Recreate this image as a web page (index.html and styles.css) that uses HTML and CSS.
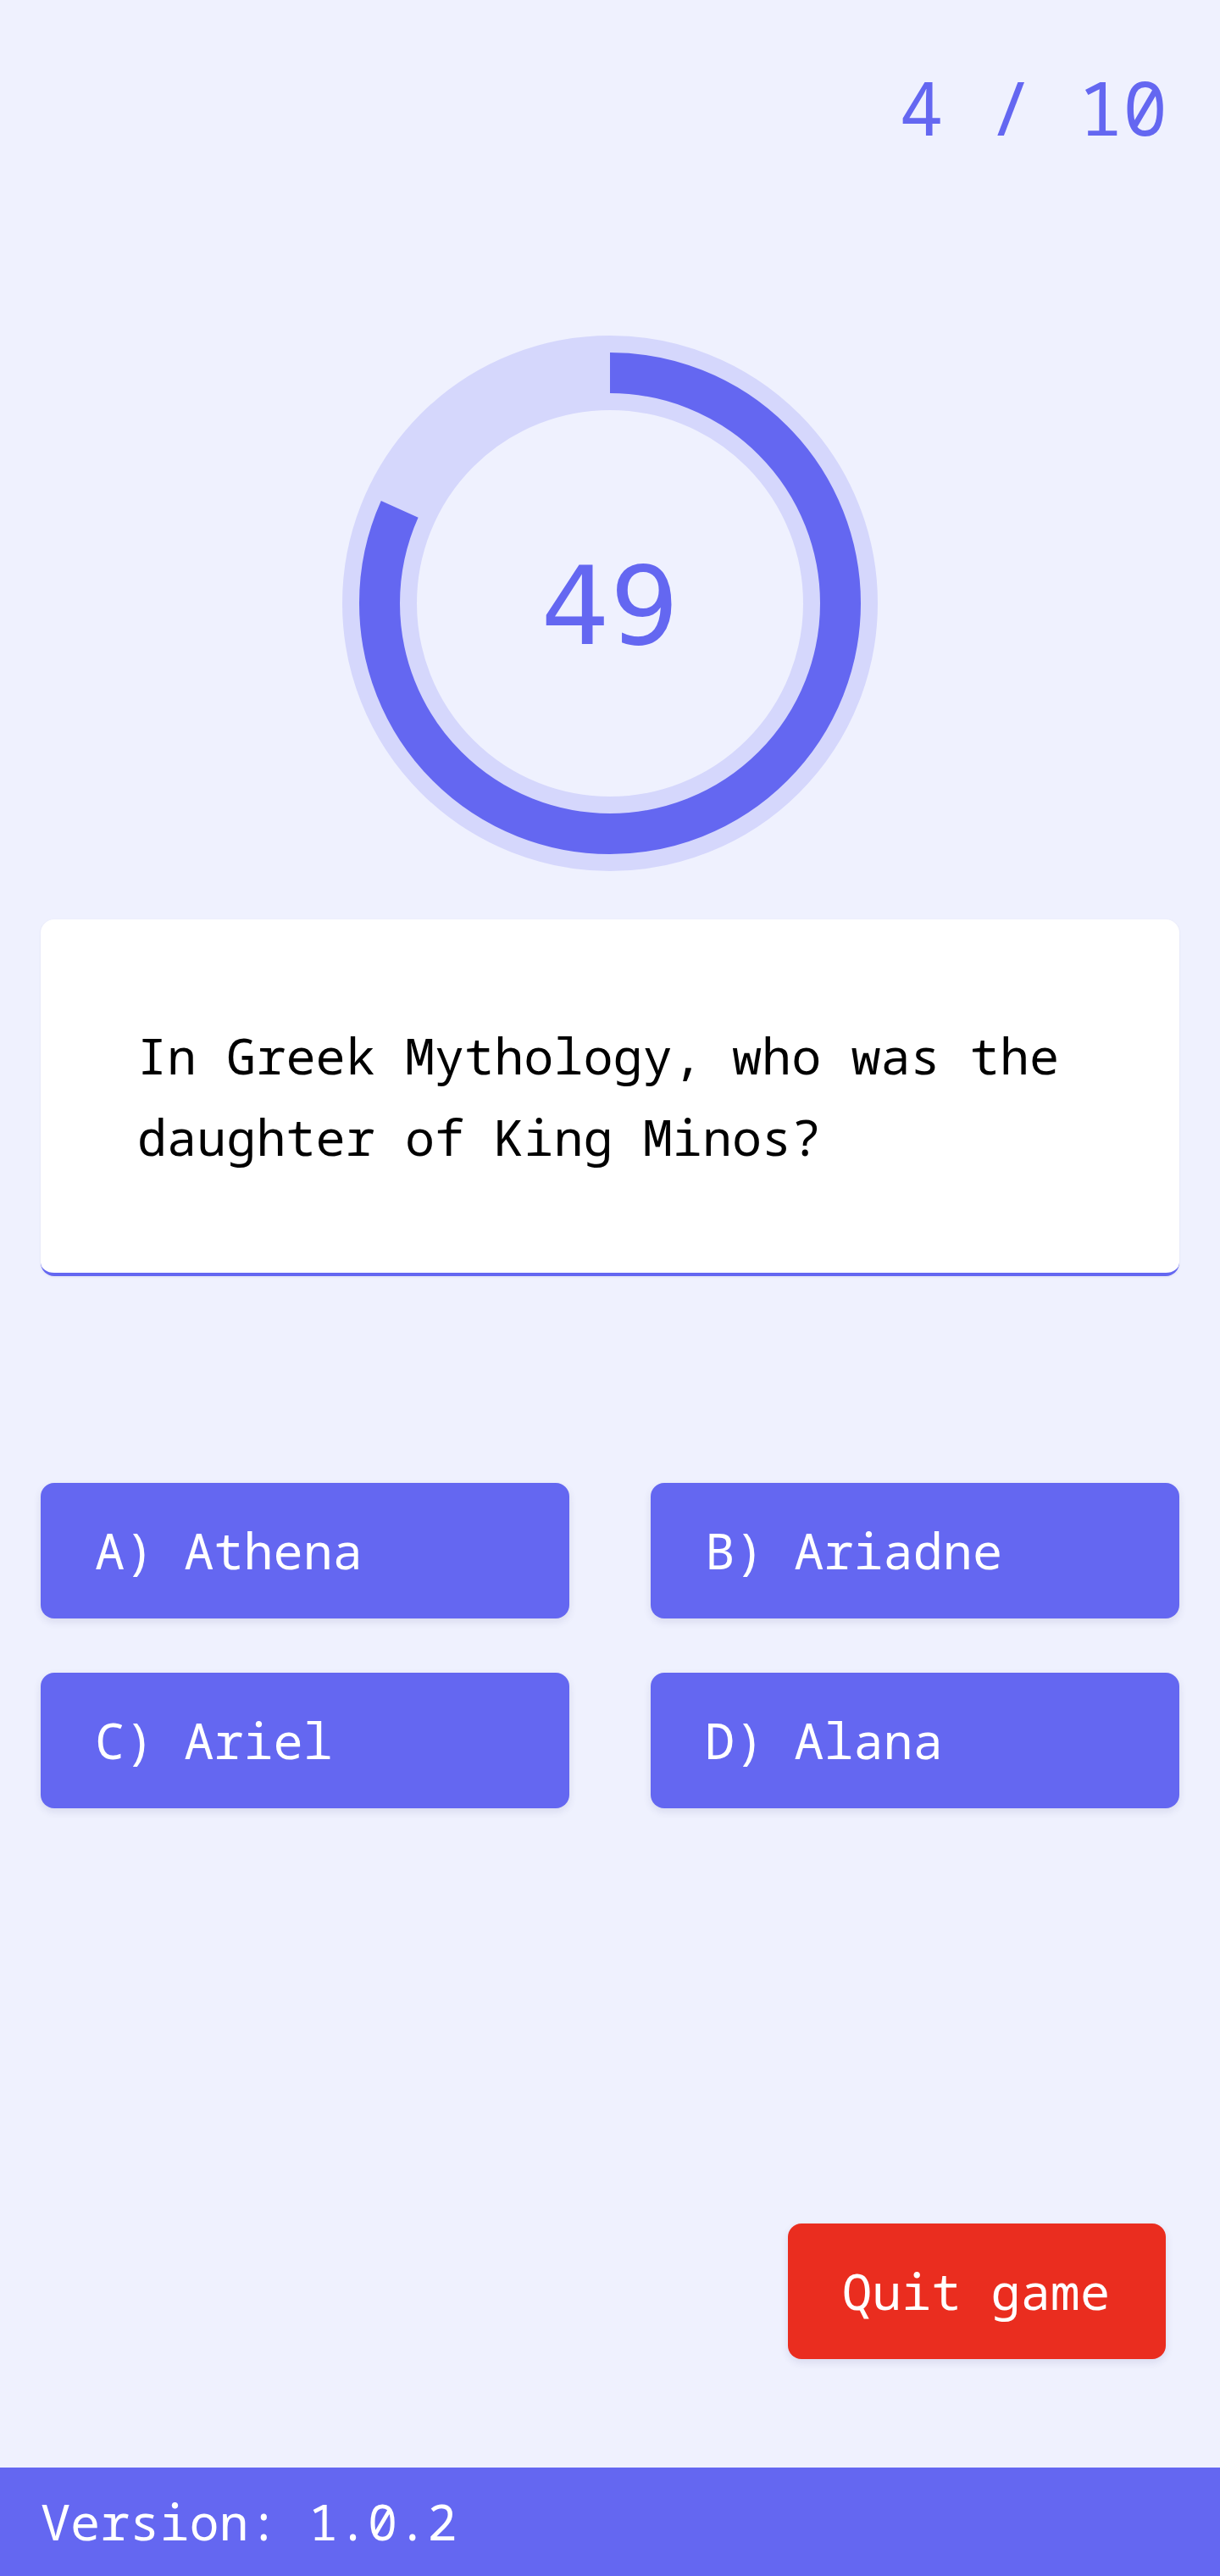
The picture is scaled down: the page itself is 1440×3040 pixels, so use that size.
FILE: index.html
```html
<!DOCTYPE html>
<html lang="en">
<head>
<meta charset="utf-8">
<title>Quiz</title>
<link rel="stylesheet" href="styles.css">
</head>
<body>
<div class="page">
  <main class="game">
    <header class="header">
      <span class="counter">4 / 10</span>
    </header>
    <section class="timer">
      <svg class="timer-ring" width="632" height="632" viewBox="0 0 632 632" aria-hidden="true">
        <circle class="ring-track" cx="316" cy="316" r="272"></circle>
        <circle class="ring-progress" cx="316" cy="316" r="272" stroke-dasharray="1395.7 1709.03" transform="rotate(-90 316 316)"></circle>
      </svg>
      <span class="timer-value">49</span>
    </section>
    <section class="question-card">
      <p class="question">In Greek Mythology, who was the daughter of King Minos?</p>
    </section>
    <section class="answers">
      <button class="answer">A) Athena</button>
      <button class="answer">B) Ariadne</button>
      <button class="answer">C) Ariel</button>
      <button class="answer">D) Alana</button>
    </section>
    <div class="actions">
      <button class="quit">Quit game</button>
    </div>
  </main>
  <footer class="footer">Version: 1.0.2</footer>
</div>
</body>
</html>
```

FILE: styles.css
```css
* { box-sizing: border-box; }

html, body {
  margin: 0;
  padding: 0;
}

body {
  background: #eff1fe;
  font-family: "Noto Sans Mono", "DejaVu Sans Mono", monospace;
  font-size: 58.5px;
  line-height: 96px;
  color: #000;
}

.page {
  min-height: 3040px;
  display: flex;
  flex-direction: column;
}

.game {
  flex: 1;
  display: flex;
  flex-direction: column;
  padding: 0 48px;
}

.header {
  display: flex;
  justify-content: flex-end;
  padding-top: 66px;
  padding-right: 14px;
}

.counter {
  font-size: 88px;
  line-height: 120px;
  color: #6467f1;
}

.timer {
  margin-top: 210px;
  align-self: center;
  display: grid;
  place-items: center;
  width: 632px;
  height: 632px;
}

.timer-ring,
.timer-value {
  grid-area: 1 / 1;
}

.timer-ring {
  display: block;
}

.ring-track {
  fill: none;
  stroke: #d5d7fc;
  stroke-width: 88;
}

.ring-progress {
  fill: none;
  stroke: #6467f1;
  stroke-width: 48;
  stroke-linecap: butt;
}

.timer-value {
  font-family: "DejaVu Sans", sans-serif;
  font-size: 128px;
  line-height: 128px;
  padding-top: 8px;
  color: #6467f1;
}

.question-card {
  margin-top: 57px;
  background: #fff;
  border-radius: 16px;
  border-bottom: 4px solid #6467f1;
  padding: 112px 114px 113px 114px;
  box-shadow: 0 1px 3px rgba(60, 60, 120, 0.08);
}

.question {
  margin: 0;
}

.answers {
  margin-top: 244px;
  display: grid;
  grid-template-columns: 1fr 1fr;
  column-gap: 96px;
  row-gap: 64px;
}

.answer {
  font: inherit;
  text-align: left;
  color: #fff;
  background: #6467f1;
  border: none;
  border-radius: 16px;
  height: 160px;
  padding: 31px 64px 33px;
  box-shadow: 0 4px 10px rgba(60, 60, 120, 0.12);
  cursor: pointer;
}

.actions {
  margin-top: 490px;
  display: flex;
  justify-content: flex-end;
  padding-right: 16px;
}

.quit {
  font: inherit;
  color: #fff;
  background: #ea2d1f;
  border: none;
  border-radius: 16px;
  height: 160px;
  padding: 31px 66px 33px 64px;
  box-shadow: 0 4px 10px rgba(60, 60, 120, 0.12);
  cursor: pointer;
}

.footer {
  background: #6467f1;
  color: #fff;
  padding: 15px 48px;
  height: 128px;
}
```
